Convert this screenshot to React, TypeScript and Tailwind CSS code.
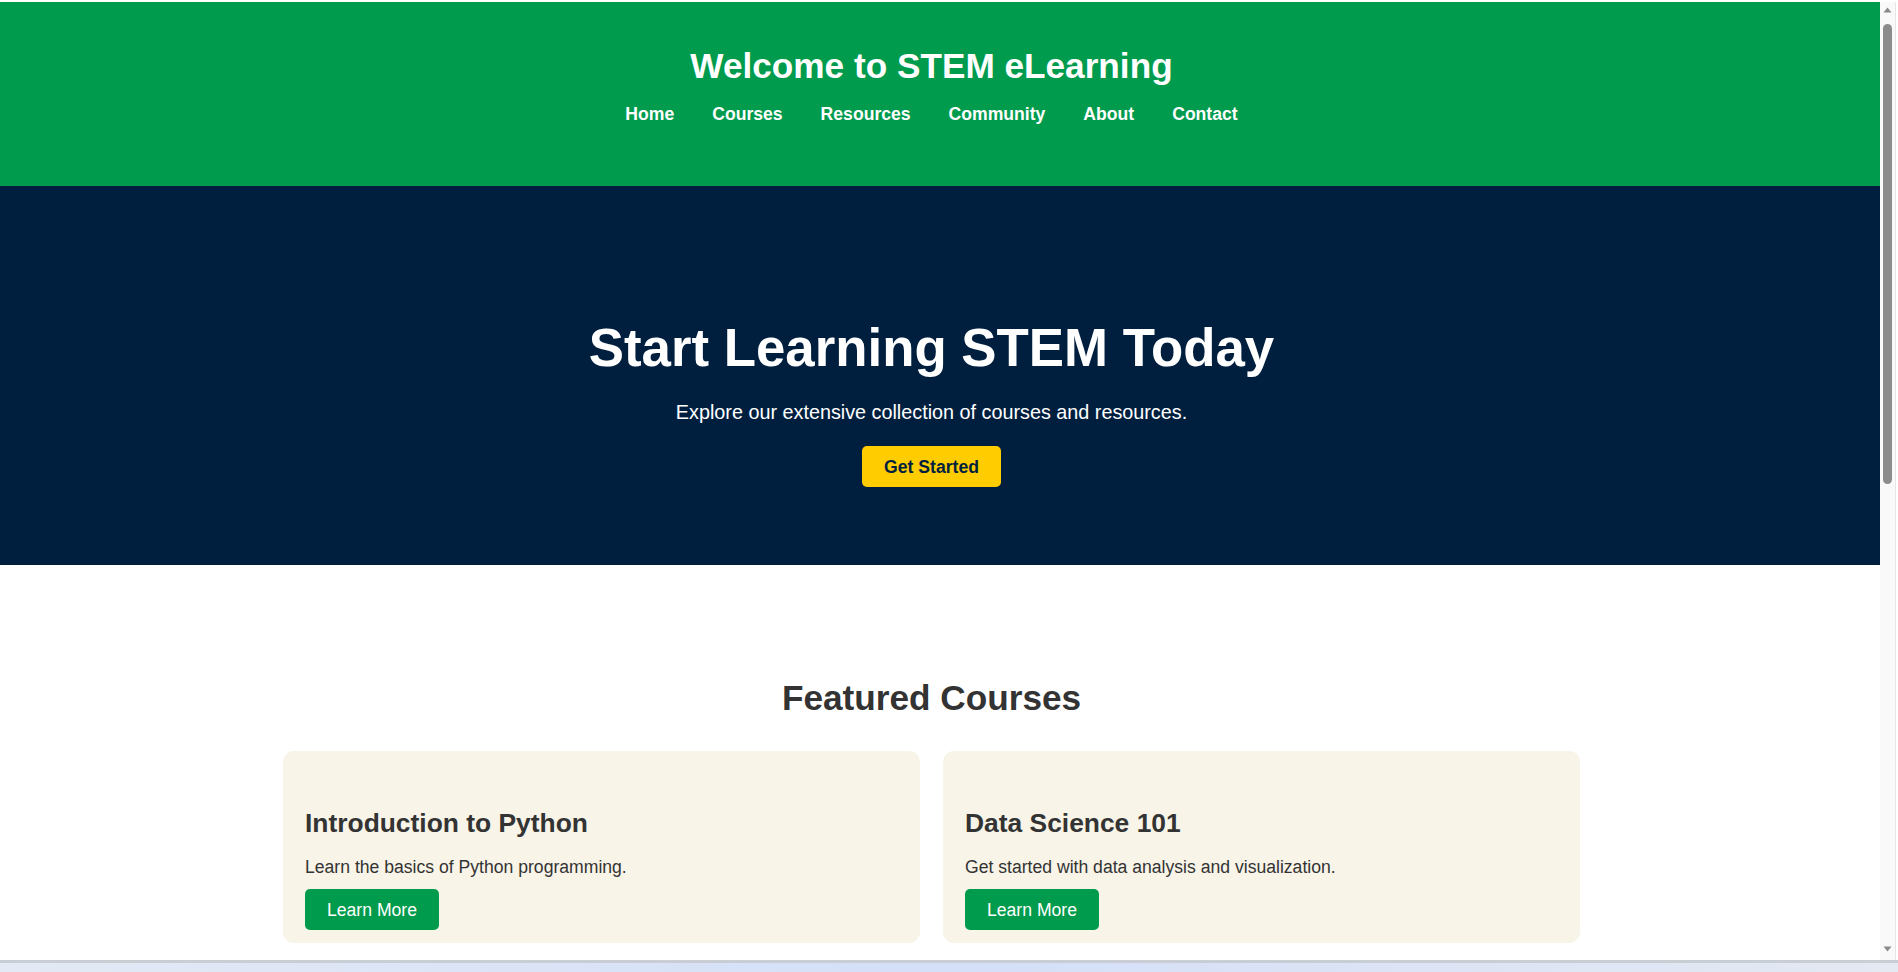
import React from 'react';

const links = ['Home', 'Courses', 'Resources', 'Community', 'About', 'Contact'];

const courses = [
  { title: 'Introduction to Python', text: 'Learn the basics of Python programming.' },
  { title: 'Data Science 101', text: 'Get started with data analysis and visualization.' },
];

function Scrollbar() {
  return (
    <div className="w-[18px] h-full flex shrink-0">
      <div className="relative w-[15px] h-full bg-[#f9f9f9]">
        {/* up arrow */}
        <svg className="absolute left-[3px] top-[5px]" width="9" height="6" viewBox="0 0 9 6">
          <path d="M4.5 0.5 L8.5 5.5 L0.5 5.5 Z" fill="#8a8a8a" />
        </svg>
        <div className="absolute left-[3px] top-[22px] w-[9px] h-[460px] rounded-full bg-[#8b8b8b]" />
        {/* down arrow */}
        <svg className="absolute left-[3px] bottom-[8px]" width="9" height="6" viewBox="0 0 9 6">
          <path d="M0.5 0.5 L8.5 0.5 L4.5 5.5 Z" fill="#8a8a8a" />
        </svg>
      </div>
      <div className="w-[3px] h-full bg-white border-l border-[#e6e6e6]" />
    </div>
  );
}

export default function App() {
  return (
    <div className="w-[1898px] h-[972px] overflow-hidden bg-white flex flex-col font-['Liberation_Sans',Arial,sans-serif]">
      <div className="h-[2px] shrink-0 bg-white" />

      <div className="flex h-[958px] shrink-0">
        <main className="w-[1880px] h-full overflow-hidden">
          {/* Header */}
          <header className="h-[184px] bg-[#009b4d] pt-[44px] pr-[17px] text-center text-white">
            <h1 className="text-[35.2px] leading-[40px] font-bold">Welcome to STEM eLearning</h1>
            <nav className="mt-[18px] flex justify-center gap-[38px] text-[17.6px] leading-[20px] font-bold">
              {links.map((l) => (
                <a key={l} href="#" className="text-white">
                  {l}
                </a>
              ))}
            </nav>
          </header>

          {/* Hero */}
          <section className="h-[379px] bg-[#001f3f] pt-[131px] pr-[17px] flex flex-col items-center text-white">
            <h2 className="text-[52.8px] leading-[61px] font-bold">Start Learning STEM Today</h2>
            <p className="mt-[23px] text-[19.8px] leading-[23px]">
              Explore our extensive collection of courses and resources.
            </p>
            <button className="mt-[22px] h-[41px] px-[22px] rounded-[5px] bg-[#ffcc00] text-[#001f3f] text-[17.6px] leading-[20px] font-bold">
              Get Started
            </button>
          </section>

          {/* Featured courses */}
          <section className="pt-[113px] pr-[17px]">
            <h2 className="text-center text-[35.2px] leading-[40px] font-bold text-[#333333]">Featured Courses</h2>
            <div className="w-[1297px] mx-auto mt-[33px] grid grid-cols-2 gap-[23px]">
              {courses.map((c) => (
                <div
                  key={c.title}
                  className="bg-[#f8f4e8] rounded-[11px] pt-[57px] px-[22px] pb-[13px] flex flex-col items-start text-[#333333]"
                >
                  <h3 className="text-[26.4px] leading-[30px] font-bold">{c.title}</h3>
                  <p className="mt-[19px] text-[17.6px] leading-[20px]">{c.text}</p>
                  <button className="mt-[12px] h-[41px] px-[22px] rounded-[5px] bg-[#009b4d] text-white text-[17.6px] leading-[20px]">
                    Learn More
                  </button>
                </div>
              ))}
            </div>
          </section>
        </main>

        <Scrollbar />
      </div>

      {/* window edge and desktop strip */}
      <div className="h-[3px] shrink-0 bg-[#c9cdd4]" />
      <div className="h-[9px] shrink-0 bg-linear-to-r from-[#e3eaf5] via-[#d4dff8] to-[#e4e9f2]" />
    </div>
  );
}
